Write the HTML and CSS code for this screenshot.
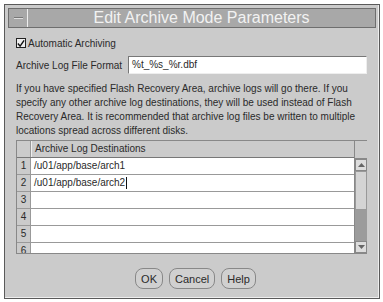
FILE: index.html
```html
<!DOCTYPE html>
<html lang="en">
<head>
  <meta charset="UTF-8">
  <title>Edit Archive Mode Parameters</title>
  <link rel="stylesheet" href="styles.css">
</head>
<body>
  <div class="window">
    <!-- Title bar -->
    <div class="titlebar">
      <div class="menu-box"><span class="dash"></span></div>
      <div class="title">Edit Archive Mode Parameters</div>
    </div>

    <div class="content">
      <label class="check-row">
        <span class="checkbox">
          <svg width="9" height="9" viewBox="0 0 9 9"><path d="M1 4.5 L3.5 7.5 L8 1" fill="none" stroke="#111" stroke-width="1.6"/></svg>
        </span>
        Automatic Archiving
      </label>

      <div class="field-row">
        <span class="field-label">Archive Log File Format</span>
        <div class="textbox">%t_%s_%r.dbf</div>
      </div>

      <p class="note">If you have specified Flash Recovery Area, archive logs will go there. If you specify any other archive log destinations, they will be used instead of Flash Recovery Area. It is recommended that archive log files be written to multiple locations spread across different disks.</p>

      <!-- Destinations table -->
      <div class="table">
        <div class="table-body">
          <div class="row head">
            <div class="num"></div>
            <div class="cell">Archive Log Destinations</div>
          </div>
          <div class="row"><div class="num">1</div><div class="cell">/u01/app/base/arch1</div></div>
          <div class="row"><div class="num">2</div><div class="cell">/u01/app/base/arch2<span class="caret"></span></div></div>
          <div class="row"><div class="num">3</div><div class="cell"></div></div>
          <div class="row"><div class="num">4</div><div class="cell"></div></div>
          <div class="row"><div class="num">5</div><div class="cell"></div></div>
          <div class="row"><div class="num">6</div><div class="cell"></div></div>
        </div>
        <div class="scrollbar">
          <div class="corner"></div>
          <div class="arrow up">
            <svg width="7" height="4" viewBox="0 0 7 4"><path d="M0 4 L3.5 0 L7 4 Z" fill="#666"/></svg>
          </div>
          <div class="thumb"></div>
          <div class="track"></div>
          <div class="arrow down">
            <svg width="7" height="4" viewBox="0 0 7 4"><path d="M0 0 L3.5 4 L7 0 Z" fill="#666"/></svg>
          </div>
        </div>
      </div>

      <div class="buttons">
        <button>OK</button>
        <button>Cancel</button>
        <button>Help</button>
      </div>
    </div>
  </div>
</body>
</html>
```

FILE: styles.css
```css
:root {
  --panel: #cbcbcb;
  --title-bg: #a8a8a8;
  --dark: #5a5a5a;
  --text: #2a2a2a;
}

* {
  box-sizing: border-box;
}

body {
  margin: 0;
  background: #fff;
  font-family: 'Liberation Sans', Arial, sans-serif;
  color: var(--text);
}

/* Window frame */
.window {
  margin: 4px 3px 3px 4px;
  height: 295px;
  border: 1px solid var(--dark);
  background: var(--panel);
  padding: 3px 3px 0 3px;
  box-shadow: inset -1px -1px 0 #eee;
}

.titlebar {
  display: flex;
  height: 20px;
  background: var(--title-bg);
  border: 1px solid #6e6e6e;
}

.menu-box {
  width: 19px;
  border-right: 1px solid #eee;
  display: flex;
  align-items: center;
  justify-content: center;
}

.dash {
  width: 9px;
  height: 2px;
  background: #777;
  border-bottom: 1px solid #ddd;
}

.title {
  flex: 1;
  text-align: center;
  color: #f2f2f2;
  font-size: 16px;
  line-height: 18px;
}

.content {
  padding: 8px 9px 0 8px;
  font-size: 10px;
}

.check-row {
  display: flex;
  align-items: center;
  gap: 2px;
  height: 14px;
}

.checkbox {
  width: 10px;
  height: 10px;
  border: 1px solid #222;
  background: #eee;
  display: flex;
  align-items: center;
  justify-content: center;
}

.field-row {
  display: flex;
  align-items: center;
  margin-top: 6px;
  height: 18px;
}

.field-label {
  width: 112px;
}

.textbox {
  flex: 1;
  height: 18px;
  border: 1px solid #777;
  border-right-color: #eee;
  border-bottom-color: #eee;
  background: #fff;
  padding: 2px 3px;
  line-height: 12px;
}

.note {
  margin: 8px 0 0 0;
  line-height: 14px;
}

/* Table */
.table {
  display: flex;
  margin-top: 2px;
  height: 114px;
  overflow: hidden;
  border: 1px solid #888;
  border-right: none;
}

.table-body {
  flex: 1;
}

.row {
  display: flex;
  height: 17px;
  border-bottom: 1px solid #999;
  background: #fff;
}

.row.head {
  background: var(--panel);
  border-bottom-color: #777;
}

.num {
  width: 14px;
  background: var(--panel);
  border-right: 1px solid #999;
  text-align: center;
  line-height: 16px;
  font-size: 10px;
}

.cell {
  flex: 1;
  padding-left: 3px;
  line-height: 16px;
  display: flex;
  align-items: center;
}

.row.head .cell {
  border-left: 1px solid #eee;
}

.caret {
  display: inline-block;
  width: 1px;
  height: 12px;
  background: #111;
  margin-left: 1px;
}

.scrollbar {
  width: 13px;
  display: flex;
  flex-direction: column;
  background: var(--panel);
  border-left: 1px solid #888;
}

.corner {
  height: 18px;
  border-bottom: 1px solid #888;
}

.arrow {
  height: 12px;
  display: flex;
  align-items: center;
  justify-content: center;
  border: 1px solid #888;
  background: #ddd;
}

.thumb {
  height: 39px;
  background: #d4d4d4;
  border: 1px solid #999;
}

.track {
  flex: 1;
  background: #9c9c9c;
}

/* Buttons */
.buttons {
  display: flex;
  justify-content: center;
  gap: 6px;
  margin-top: 14px;
  padding-left: 8px;
}

.buttons button {
  font-family: 'Liberation Sans', Arial, sans-serif;
  font-size: 11px;
  color: var(--text);
  height: 21px;
  padding: 0 5px;
  background: #d0d0d0;
  border: 1px solid #888;
  border-radius: 8px;
}
```
